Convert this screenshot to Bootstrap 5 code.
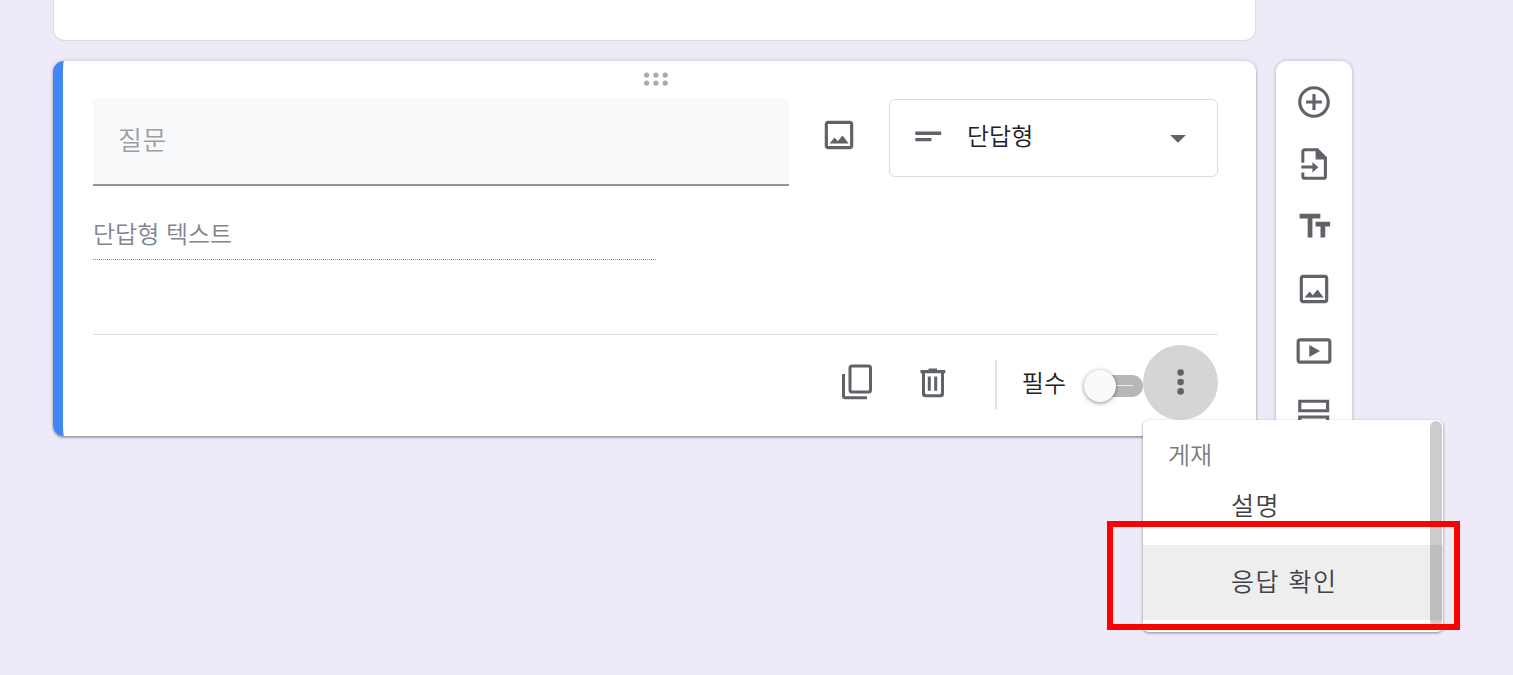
<!DOCTYPE html>
<html lang="ko">
<head>
<meta charset="utf-8">
<meta name="viewport" content="width=device-width, initial-scale=1">
<title>설문지 편집</title>
<link href="https://cdn.jsdelivr.net/npm/bootstrap@5.3.0/dist/css/bootstrap.min.css" rel="stylesheet">
<style>
body{background:#eeeaf8;font-family:"Noto Sans CJK KR","Noto Sans",sans-serif;font-weight:350;font-size:24px;line-height:36px;color:#202124;height:675px;overflow:hidden}
svg{display:block;flex:none}
.ico{width:38px;height:38px;fill:#5f6368}
.editor{padding-left:53px;gap:20px}
.form-col{width:1203px;gap:20px}
.sheet{background:#fff;border-radius:11px}
.prev{height:41px;border:1px solid #dcdae2;border-top:0;border-radius:0 0 11px 11px}
.question{height:375px;border-left:10px solid #4285f4;padding:0 38px 0 30px;box-shadow:0 2px 2px rgba(70,60,90,.36),0 0 3px 1px rgba(60,50,80,.16)}
.grip{height:37px;padding-top:11px}
.q-input{width:696px;height:88px;background:#f8f9fb;border-radius:6px 6px 0 0;border-bottom:2px solid #919499;padding:0 26px 4px 25px;font-size:26px;letter-spacing:.5px;color:#9b9ea3}
.q-image{margin:18px 0 0 31px}
.q-type{width:329px;height:78px;margin-top:1px;border:1px solid #d9dbde;border-radius:6px;margin-left:auto;padding:0 20px 5px 19px}
.q-type span{padding-bottom:2px}
.answer{width:563px;height:74px;padding-top:29px;border-bottom:1px dotted #85888c;color:#80868b}
.foot{margin-top:74px;height:102px;border-top:1px solid #dadce0;padding-top:10px}
.actions{margin-top:3px}
.trash{margin:2px 0 0 48px}
.vline{width:2px;height:49px;background:#e0e1e5;margin:5px 25px 0 49px}
.toggle{width:59px;height:32px;margin:6px 0 0 18px}
.knob-track{width:42px;height:22px;border-radius:11px;background:#b7b7b7;right:0;top:5px}
.knob-line{width:17px;height:1px;background:#f2f2f2;right:10px;top:15px}
.knob{width:32px;height:32px;background:#fafafa;box-shadow:0 1px 4px rgba(0,0,0,.45);left:0;top:0}
.more{width:75px;height:75px;background:#d5d5d5}
.tools{width:76px;height:420px;margin-top:61px;padding-top:22px;gap:24.2px;box-shadow:0 0 3px 1px rgba(60,50,80,.2)}
.popup{left:1143px;top:420px;width:300px;height:212px;background:#fff;border-radius:6px;box-shadow:0 1px 3px rgba(60,50,80,.55);overflow:hidden;color:#3f4144}
.popup-head{height:48px;padding:16px 0 0 25px;color:#7c7c7c}
.popup-row{height:77px;padding:0 0 5px 88px;letter-spacing:1.5px;font-size:25px}
.popup-row.hot{height:75px;background:#eee;padding-bottom:6px}
.thumb{right:1px;top:1px;width:12px;height:206px;border-radius:6px;background:rgba(0,0,0,.2)}
.marker{left:1107px;top:521px;width:353px;height:109px;border:6px solid #f00}
</style>
</head>
<body class="position-relative">
<div class="editor d-flex align-items-start">
  <main class="form-col d-flex flex-column">
    <section class="prev sheet"></section>
    <section class="question sheet">
      <div class="grip d-flex justify-content-center">
        <svg width="24" height="14" viewBox="0 0 24 14" fill="#aaa"><circle cx="2.6" cy="3" r="2.6"/><circle cx="11.9" cy="3" r="2.6"/><circle cx="21.2" cy="3" r="2.6"/><circle cx="2.6" cy="11" r="2.6"/><circle cx="11.9" cy="11" r="2.6"/><circle cx="21.2" cy="11" r="2.6"/></svg>
      </div>
      <div class="d-flex align-items-start">
        <div class="q-input d-flex align-items-center">질문</div>
        <svg class="ico q-image" viewBox="0 0 24 24"><path d="M19 5v14H5V5h14m0-2H5c-1.100 0-2 .9-2 2v14c0 1.100.9 2 2 2h14c1.100 0 2-.9 2-2V5c0-1.100-.9-2-2-2zM14.200 12.300 11.200 15.900 9.300 13.500 6 17.300h12.100z"/></svg>
        <div class="q-type d-flex align-items-center">
          <svg class="ico" viewBox="0 0 24 24"><path d="M4 9.200h16.300v2.200H4zm0 4h10.200v2.100H4z"/></svg>
          <span class="ms-3 ps-1">단답형</span>
          <svg class="ico ms-auto" viewBox="0 0 24 24"><path d="M7 11.300l5 5 5-5z"/></svg>
        </div>
      </div>
      <div class="answer">단답형 텍스트</div>
      <div class="foot d-flex justify-content-end align-items-start">
        <div class="actions d-flex align-items-center h-75">
          <svg width="30" height="36" viewBox="0 0 30 36" fill="none" stroke="#5f6368" stroke-width="3"><rect x="8" y="2" width="20.500" height="26" rx="2"/><path d="M1.500 10v22q0 1.800 1.800 1.800H25"/></svg>
          <svg class="trash" width="26" height="30" viewBox="0 0 26 30" fill="#5f6368"><path d="M8.500 .5h8.500v1.500h8.300v3.200H24V26q0 3.200-3.200 3.200H5.200Q2 29.200 2 26V5.200H.5V2h8zM5 5.200v19.600q0 1.400 1.400 1.400h13.200q1.400 0 1.400-1.400V5.200zM7.800 8.500h3v14.300h-3zm6.400 0h3v14.300h-3z" fill-rule="evenodd"/></svg>
          <div class="vline"></div>
          <span>필수</span>
        </div>
        <div class="d-flex align-items-center">
          <div class="toggle position-relative"><div class="knob-track position-absolute"></div><div class="knob-line position-absolute"></div><div class="knob rounded-circle position-absolute"></div></div>
          <div class="more rounded-circle d-flex align-items-center justify-content-center">
            <svg width="8" height="28" viewBox="0 0 8 28" fill="#5f6368"><circle cx="3.600" cy="3.500" r="3.300"/><circle cx="3.600" cy="13" r="3.300"/><circle cx="3.600" cy="22.400" r="3.300"/></svg>
          </div>
        </div>
      </div>
    </section>
  </main>
  <aside class="tools sheet d-flex flex-column align-items-center">
    <svg class="ico" viewBox="0 0 24 24"><path d="M13 7h-2v4H7v2h4v4h2v-4h4v-2h-4V7zm-1-5C6.480 2 2 6.480 2 12s4.480 10 10 10 10-4.480 10-10S17.520 2 12 2zm0 18c-4.410 0-8-3.590-8-8s3.590-8 8-8 8 3.590 8 8-3.590 8-8 8z"/></svg>
    <svg class="ico" viewBox="0 0 24 24"><path d="M14.500 2H6C4.900 2 4 2.900 4 4v7.200h1.900V4H13v5.200h5.200V20H5.900v-2.700H4V20c0 1.100.9 2 2 2h12.200c1.100 0 2-.9 2-2V7.700zM11 10.700V13H4v1.900h7v2.400l3.800-3.300z"/></svg>
    <svg class="ico" viewBox="0 0 24 24"><path d="M2.900 4.300v3h5.100v12h3v-12H16v-3H2.900zm19.300 5h-9.200v3h3.100v7h3v-7h3.100z"/></svg>
    <svg class="ico" viewBox="0 0 24 24"><path d="M19 5v14H5V5h14m0-2H5c-1.100 0-2 .9-2 2v14c0 1.100.9 2 2 2h14c1.100 0 2-.9 2-2V5c0-1.100-.9-2-2-2zM14.200 12.300 11.200 15.900 9.300 13.500 6 17.300h12.100z"/></svg>
    <svg class="ico" viewBox="0 0 24 24"><path d="M9 8.200v7.600l6.800-3.800zM21 4H3c-1.100 0-2 .9-2 2v12c0 1.100.9 2 2 2h18c1.100 0 2-.9 2-2V6c0-1.100-.9-2-2-2zm0 14H3V6h18z"/></svg>
    <svg class="ico" viewBox="0 0 24 24"><path d="M21.600 3.600H2v8h19.600zm-2 6H4v-4h15.600zM21.600 13.500H2v8h19.600zm-2 6H4v-4h15.600z" fill-rule="evenodd"/></svg>
  </aside>
</div>
<div class="popup position-absolute">
  <div class="popup-head">게재</div>
  <div class="popup-row d-flex align-items-center">설명</div>
  <div class="popup-row hot d-flex align-items-center">응답 확인</div>
  <div class="thumb position-absolute"></div>
</div>
<div class="marker position-absolute"></div>
<script src="https://cdn.jsdelivr.net/npm/bootstrap@5.3.0/dist/js/bootstrap.bundle.min.js"></script>
</body>
</html>
